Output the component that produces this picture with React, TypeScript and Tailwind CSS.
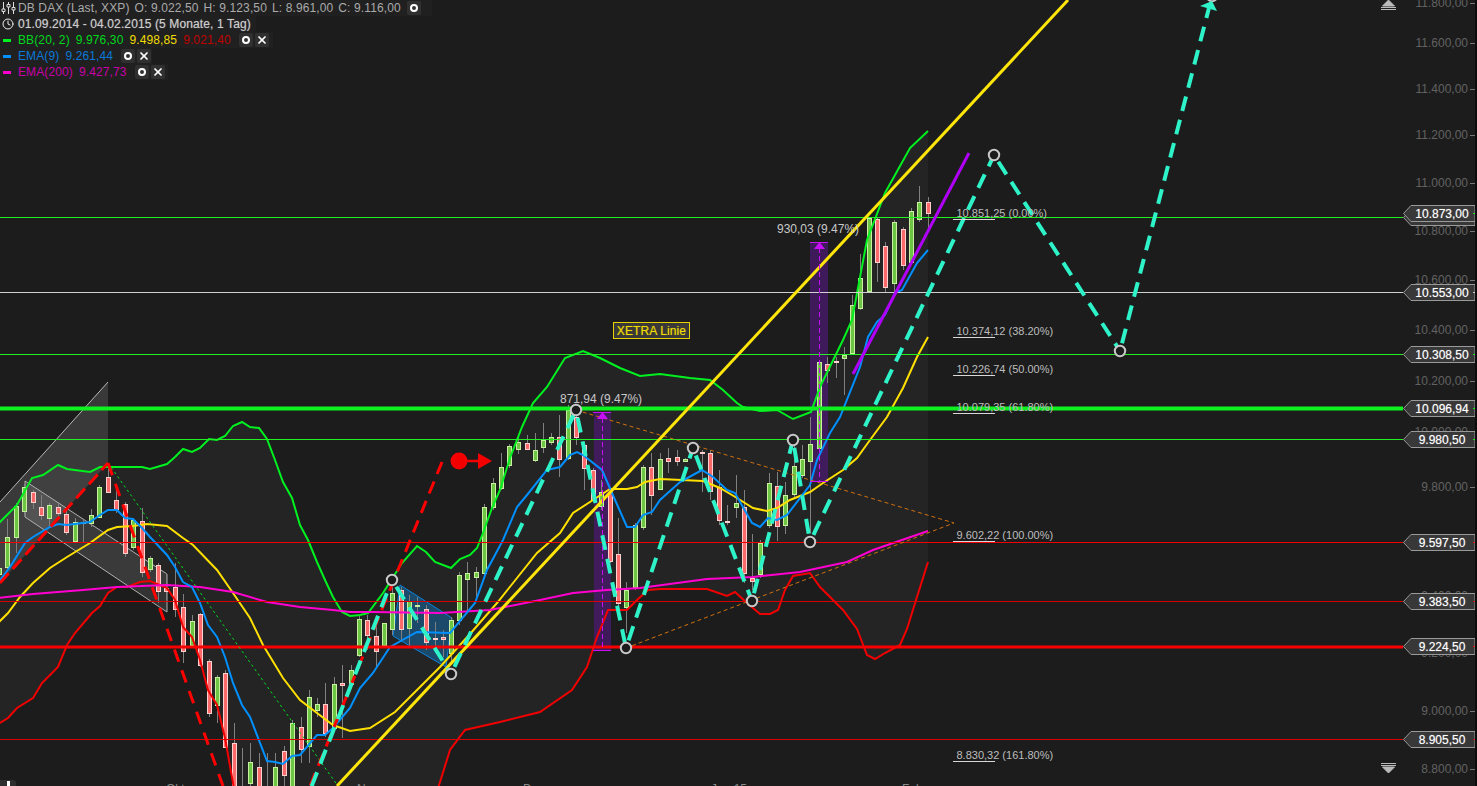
import React from 'react';
import { Clock, X } from 'lucide-react';

type Candle = [number, number, number, number, number, 'g' | 'r'];

// x, high, body top, body bottom, low, colour (all in chart pixels)
const CANDLES: Candle[] = [
  [-1, 565, 568, 574, 580, 'g'], [7, 519, 537, 567, 570, 'g'], [16, 503, 506, 537, 553, 'g'], [24, 484, 487, 511, 515, 'g'],
  [33, 490, 492, 502, 509, 'r'], [41, 495, 507, 515, 520, 'r'], [49, 503, 505, 518, 527, 'g'], [58, 502, 507, 513, 520, 'r'],
  [66, 510, 514, 532, 535, 'r'], [75, 518, 522, 541, 542, 'g'], [83, 520, 522, 523, 543, 'g'], [91, 509, 515, 523, 527, 'g'],
  [99, 485, 487, 517, 517, 'g'], [108, 468, 477, 492, 493, 'r'], [116, 490, 500, 509, 513, 'r'], [125, 502, 504, 553, 557, 'r'],
  [133, 518, 520, 547, 550, 'g'], [142, 508, 521, 572, 577, 'r'], [150, 556, 558, 569, 572, 'g'], [158, 563, 565, 591, 603, 'r'],
  [166, 573, 588, 591, 600, 'r'], [175, 563, 587, 609, 617, 'r'], [183, 594, 607, 651, 663, 'r'], [192, 615, 621, 645, 647, 'g'],
  [200, 613, 614, 665, 667, 'r'], [209, 659, 661, 713, 717, 'r'], [217, 675, 677, 705, 723, 'g'], [225, 670, 673, 747, 748, 'r'],
  [234, 723, 743, 800, 800, 'r'], [242, 748, 800, 810, 810, 'r'], [250, 743, 762, 783, 790, 'g'], [259, 753, 767, 800, 800, 'r'],
  [267, 753, 800, 810, 810, 'r'], [275, 753, 767, 800, 800, 'g'], [284, 746, 751, 775, 786, 'r'], [292, 720, 723, 800, 800, 'g'],
  [301, 717, 727, 749, 763, 'r'], [309, 690, 697, 746, 763, 'g'], [317, 698, 704, 710, 717, 'g'], [325, 683, 704, 733, 737, 'r'],
  [334, 677, 684, 728, 730, 'g'], [342, 665, 683, 685, 738, 'r'], [351, 665, 670, 684, 685, 'g'], [359, 615, 619, 655, 657, 'g'],
  [367, 615, 620, 635, 650, 'r'], [376, 623, 636, 651, 667, 'r'], [384, 623, 623, 645, 648, 'g'], [392, 587, 593, 629, 635, 'g'],
  [401, 587, 590, 629, 640, 'r'], [409, 595, 601, 628, 645, 'g'], [417, 597, 605, 606, 623, 'g'], [426, 605, 609, 642, 650, 'r'],
  [435, 622, 638, 639, 653, 'r'], [443, 630, 637, 639, 657, 'r'], [451, 617, 620, 653, 663, 'g'], [459, 572, 575, 620, 625, 'g'],
  [467, 562, 573, 579, 610, 'g'], [476, 567, 572, 577, 597, 'g'], [484, 504, 507, 573, 575, 'g'], [493, 478, 483, 507, 510, 'g'],
  [501, 453, 467, 488, 490, 'g'], [509, 444, 446, 465, 468, 'g'], [518, 437, 442, 449, 454, 'g'], [527, 435, 443, 449, 450, 'r'],
  [535, 433, 450, 460, 462, 'g'], [543, 423, 440, 447, 453, 'g'], [551, 433, 437, 442, 445, 'g'], [559, 415, 437, 459, 477, 'r'],
  [568, 405, 410, 458, 460, 'g'], [576, 413, 417, 437, 445, 'r'], [584, 443, 445, 468, 490, 'r'], [593, 468, 470, 500, 502, 'r'],
  [601, 480, 492, 506, 510, 'g'], [610, 490, 492, 561, 563, 'r'], [618, 518, 554, 603, 608, 'r'], [626, 582, 590, 607, 633, 'g'],
  [635, 523, 525, 587, 590, 'g'], [643, 465, 467, 527, 530, 'g'], [651, 453, 467, 495, 515, 'r'], [660, 453, 459, 489, 490, 'g'],
  [668, 448, 458, 461, 473, 'r'], [677, 450, 457, 461, 466, 'r'], [685, 458, 459, 461, 462, 'g'], [702, 450, 452, 453, 492, 'r'],
  [710, 450, 453, 491, 500, 'r'], [719, 470, 487, 520, 525, 'r'], [727, 505, 521, 522, 525, 'r'], [736, 475, 503, 507, 518, 'g'],
  [744, 490, 507, 573, 583, 'r'], [752, 534, 578, 581, 590, 'r'], [760, 540, 543, 574, 578, 'g'], [769, 473, 483, 525, 528, 'g'],
  [777, 472, 486, 526, 541, 'r'], [785, 482, 495, 525, 534, 'g'], [794, 443, 466, 494, 497, 'g'], [802, 445, 459, 475, 478, 'g'],
  [810, 417, 444, 461, 533, 'g'], [819, 360, 362, 448, 450, 'g'], [827, 357, 364, 370, 383, 'r'], [836, 357, 361, 362, 378, 'r'],
  [844, 347, 355, 358, 395, 'g'], [852, 295, 305, 353, 354, 'g'], [860, 254, 278, 308, 310, 'g'], [869, 217, 218, 291, 292, 'g'],
  [877, 218, 219, 262, 282, 'r'], [885, 242, 246, 287, 292, 'r'], [894, 220, 222, 283, 292, 'g'], [903, 227, 229, 265, 270, 'r'],
  [911, 208, 211, 262, 264, 'g'], [919, 186, 202, 219, 222, 'g'], [928, 197, 202, 213, 230, 'r'],
];

const BB_UPPER = [
  [-2, 524], [17, 505], [32, 478], [43, 475], [58, 465], [67, 469], [90, 472], [100, 467], [120, 467], [142, 467], [150, 469], [167, 464],
  [175, 457], [183, 449], [192, 452], [200, 448], [209, 439], [217, 440], [225, 436], [233, 426], [242, 422], [250, 427], [259, 428],
  [267, 439], [275, 460], [283, 482], [292, 498], [300, 525], [308, 540], [317, 562], [325, 580], [333, 597], [342, 612], [350, 616],
  [360, 615], [368, 613], [383, 593], [402, 563], [417, 546], [426, 552], [435, 562], [451, 568], [460, 559], [470, 555], [477, 548],
  [483, 533], [492, 508], [500, 490], [510, 458], [522, 427], [533, 403], [547, 387], [565, 358], [583, 351], [600, 358], [620, 368],
  [640, 376], [660, 374], [690, 378], [710, 380], [723, 390], [737, 403], [743, 407], [760, 411], [777, 410], [793, 419], [811, 412],
  [820, 387], [843, 340], [852, 320], [867, 240], [885, 193], [895, 175], [910, 148], [928, 131],
];

const BB_MID = [
  [-2, 623], [8, 613], [20, 597], [33, 583], [50, 568], [67, 557], [90, 543], [108, 530], [117, 527], [133, 526], [147, 524], [167, 526],
  [183, 538], [193, 545], [217, 570], [233, 593], [250, 618], [263, 645], [283, 678], [300, 700], [317, 713], [333, 725], [350, 731],
  [370, 728], [395, 712], [417, 690], [440, 667], [470, 634], [497, 603], [517, 578], [537, 553], [560, 533], [573, 513], [593, 500],
  [610, 489], [627, 489], [637, 487], [645, 482], [660, 479], [703, 481], [720, 488], [737, 498], [753, 508], [767, 511], [777, 508],
  [790, 500], [810, 492], [823, 483], [843, 470], [857, 458], [870, 440], [887, 417], [903, 388], [917, 357], [928, 337],
];

const BB_LOWER = [
  [-2, 724], [8, 718], [17, 708], [33, 698], [42, 683], [58, 667], [67, 645], [75, 633], [92, 613], [100, 606], [108, 593], [117, 587],
  [127, 587], [140, 582], [150, 581], [167, 588], [175, 600], [183, 627], [192, 637], [200, 660], [208, 690], [217, 705], [225, 738],
  [233, 783], [240, 830], [425, 830], [450, 750], [465, 730], [500, 722], [540, 712], [572, 690], [587, 667], [597, 637], [608, 610],
  [627, 610], [637, 600], [648, 590], [660, 589], [707, 589], [727, 596], [735, 592], [747, 603], [760, 614], [770, 614], [778, 610],
  [785, 590], [793, 576], [810, 573], [820, 587], [843, 610], [857, 629], [867, 655], [875, 659], [885, 653], [900, 645], [907, 629],
  [917, 597], [928, 562],
];

const EMA9 = [
  [-2, 583], [10, 567], [25, 543], [33, 537], [50, 527], [58, 524], [67, 525], [90, 522], [100, 515], [108, 510], [117, 510], [125, 518],
  [133, 519], [142, 528], [150, 537], [167, 555], [175, 567], [183, 582], [192, 587], [200, 603], [208, 625], [217, 637], [225, 657],
  [233, 683], [242, 705], [250, 717], [267, 761], [275, 762], [283, 764], [292, 756], [300, 755], [317, 735], [325, 735], [333, 728],
  [350, 708], [360, 688], [373, 673], [390, 647], [417, 632], [450, 633], [475, 603], [487, 570], [503, 540], [517, 507], [527, 495],
  [547, 470], [560, 467], [570, 455], [577, 452], [583, 455], [602, 470], [612, 493], [627, 527], [635, 527], [643, 515], [652, 512],
  [660, 500], [680, 482], [702, 470], [713, 477], [727, 490], [735, 493], [752, 523], [760, 527], [768, 518], [777, 520], [787, 515],
  [810, 485], [817, 460], [830, 433], [840, 417], [860, 367], [868, 337], [877, 322], [885, 315], [895, 293], [902, 290], [917, 263], [928, 250],
];

const EMA200 = [
  [-2, 598], [33, 594], [83, 590], [117, 587], [167, 585], [200, 587], [233, 592], [267, 602], [300, 607], [333, 610], [350, 612], [373, 612],
  [440, 613], [490, 610], [540, 600], [573, 593], [607, 590], [640, 588], [707, 579], [753, 577], [800, 572], [847, 562], [873, 550], [928, 531],
];

const TEAL_LEGS = [
  [[300, 816], [392, 580]], [[392, 580], [451, 674]], [[451, 674], [576, 410]], [[576, 410], [626, 648]], [[626, 648], [693, 448]],
  [[693, 448], [752, 601]], [[752, 601], [793, 440]], [[793, 440], [810, 542]], [[810, 542], [994, 155]], [[994, 155], [1120, 351]],
  [[1120, 351], [1210, 4]],
];

const PIVOTS = [[392, 580], [451, 674], [576, 410], [626, 648], [693, 448], [752, 601], [793, 440], [810, 542], [994, 155], [1120, 351], [1212, -4]];

const H_LINES: [number, string, number][] = [
  [217, '#22f022', 1], [292, '#d0d0d0', 1], [354, '#22f022', 1], [408, '#0ef31f', 4], [439, '#22f022', 1],
  [542, '#f00000', 1.2], [601, '#d80000', 1], [646.5, '#f80000', 3], [739, '#d80000', 1],
];

const FIBS: [string, number][] = [
  ['10.851,25 (0.00%)', 217], ['10.374,12 (38.20%)', 335], ['10.226,74 (50.00%)', 373], ['10.079,35 (61.80%)', 411],
  ['9.602,22 (100.00%)', 539], ['8.830,32 (161.80%)', 759],
];

const AXIS: [string, number][] = [
  ['11.800,00', 3], ['11.600,00', 43], ['11.400,00', 89], ['11.200,00', 135], ['11.000,00', 183], ['10.800,00', 231], ['10.600,00', 280],
  ['10.400,00', 330], ['10.200,00', 381], ['10.000,00', 432], ['9.800,00', 487], ['9.400,00', 596], ['9.200,00', 653], ['9.000,00', 711],
  ['8.800,00', 769],
];

const TAGS: [string, number, string][] = [
  ['', 217, '#22f022'], ['10.873,00', 213, '#22f022'], ['10.553,00', 292, '#d0d0d0'], ['10.308,50', 354, '#22f022'], ['10.096,94', 408, '#0ef31f'],
  ['9.980,50', 439, '#22f022'], ['9.597,50', 542, '#f00000'], ['9.383,50', 601, '#d80000'], ['9.224,50', 646, '#f80000'], ['8.905,50', 739, '#d80000'],
];

const MONTHS: [string, number][] = [['Okt', 166], ['Nov', 357], ['Dez', 523], ['Jan 15', 711], ['Feb', 902]];

const pts = (a: number[][]) => a.map((p) => p.join(',')).join(' ');

function EyeButton() {
  return (
    <span className="flex h-[14px] w-[14px] items-center justify-center rounded-[2px] bg-[#303030]">
      <span className="h-[8px] w-[8px] rounded-full border-2 border-white" />
    </span>
  );
}

function CloseButton() {
  return (
    <span className="flex h-[14px] w-[14px] items-center justify-center rounded-[2px] bg-[#303030]">
      <X size={12} strokeWidth={3.5} color="#fff" />
    </span>
  );
}

function Legend() {
  return (
    <div className="absolute left-0 top-0 flex flex-col items-start text-[12px] leading-[16px] tracking-[0.12px]">
      <div className="flex h-[16px] items-center bg-[#202020] pr-[11px]">
        <svg width="15" height="14" viewBox="0 0 15 14" className="ml-[1px] mr-[2px]" fill="none" stroke="#ddd">
          <path d="M2.5 1v12M7.5 1v12M12.5 1v12" strokeWidth="1" />
          <path d="M1 8h3v2.5H1zM6 3.5h3V6H6zM11 6.5h3V9h-3z" fill="#202020" strokeWidth="1" />
        </svg>
        <span className="text-[#aaaaaa]">DB DAX (Last, XXP)</span>
        <span className="ml-[5px] text-[#aaaaaa]">O: 9.022,50</span>
        <span className="ml-[5px] text-[#aaaaaa]">H: 9.123,50</span>
        <span className="ml-[5px] text-[#aaaaaa]">L: 8.961,00</span>
        <span className="ml-[5px] text-[#aaaaaa]">C: 9.116,00</span>
        <span className="ml-[6px]"><EyeButton /></span>
      </div>
      <div className="flex h-[16px] items-center bg-[#202020] pr-[5px]">
        <span className="ml-[2px] mr-[4px] flex w-[12px] justify-center"><Clock size={12} strokeWidth={2} color="#eee" /></span>
        <span className="text-[#cccccc] [text-shadow:0_0_1px_rgba(255,255,255,0.45)]">01.09.2014 - 04.02.2015 (5 Monate, 1 Tag)</span>
      </div>
      <div className="flex h-[16px] items-center bg-[#202020] pr-[4px]">
        <span className="ml-[3px] mr-[7px] h-[3px] w-[8px] bg-[#00f020]" />
        <span className="text-[#00d81c]">BB(20, 2)</span>
        <span className="ml-[6px] text-[#00d81c]">9.976,30</span>
        <span className="ml-[6px] text-[#f0dc00]">9.498,85</span>
        <span className="ml-[6px] text-[#c00000]">9.021,40</span>
        <span className="ml-[8px] flex gap-[2px]"><EyeButton /><CloseButton /></span>
      </div>
      <div className="flex h-[16px] items-center bg-[#202020] pr-[1px]">
        <span className="ml-[3px] mr-[7px] h-[3px] w-[8px] bg-[#0090ff]" />
        <span className="text-[#0a78d8]">EMA(9)</span>
        <span className="ml-[6px] text-[#0a78d8]">9.261,44</span>
        <span className="ml-[8px] flex gap-[2px]"><EyeButton /><CloseButton /></span>
      </div>
      <div className="flex h-[16px] items-center bg-[#202020] pr-[3px]">
        <span className="ml-[3px] mr-[7px] h-[3px] w-[8px] bg-[#ff00d0]" />
        <span className="text-[#c800a8]">EMA(200)</span>
        <span className="ml-[6px] text-[#c800a8]">9.427,73</span>
        <span className="ml-[8px] flex gap-[2px]"><EyeButton /><CloseButton /></span>
      </div>
    </div>
  );
}

function ChartDrawing() {
  return (
    <svg width="1403" height="786" className="absolute left-0 top-0 block" fill="none">
      {/* bollinger band fill */}
      <polygon points={pts([...BB_UPPER, ...[...BB_LOWER].reverse()])} fill="#242424" />

      {/* grey channels */}
      <polygon points="0,502 108,382 108,463 0,583" fill="#ffffff" fillOpacity="0.13" />
      <polyline points="0,502 108,382" stroke="#b8b8b8" />
      <polygon points="25,481 167,574 167,612 25,517" fill="#ffffff" fillOpacity="0.1" stroke="#b0b0b0" />

      {/* measure bars */}
      <rect x="594" y="412" width="17" height="238" fill="#4a1a70" fillOpacity="0.75" />
      <rect x="810" y="242" width="18" height="239" fill="#4a1a70" fillOpacity="0.75" />

      {/* blue box */}
      <polygon points="400,585 452,618 446,667 393,636" fill="#1b4a6b" stroke="#0a84e0" />

      {CANDLES.map(([x, hi, top, bot, lo, c]) => (
        <g key={x}>
          <line x1={x + 0.5} x2={x + 0.5} y1={hi} y2={lo} stroke="#808080" />
          <rect
            x={x - 1.5}
            y={top + 0.5}
            width={4}
            height={Math.max(bot - top, 1)}
            fill={c === 'g' ? '#6cc644' : '#fa6a6a'}
            stroke={c === 'g' ? '#c8f0a0' : '#ffd0d0'}
          />
        </g>
      ))}

      <polyline points={pts(BB_LOWER)} stroke="#f00000" strokeWidth="2" />
      <polyline points={pts(BB_UPPER)} stroke="#00f020" strokeWidth="2" />
      <polyline points={pts(BB_MID)} stroke="#ffe000" strokeWidth="2" />
      <polyline points={pts(EMA200)} stroke="#ff00d0" strokeWidth="2" />
      <polyline points={pts(EMA9)} stroke="#0090ff" strokeWidth="2" />

      {H_LINES.map(([y, c, w]) => (
        <line key={y} x1="0" x2="1403" y1={y + 0.5} y2={y + 0.5} stroke={c} strokeWidth={w} />
      ))}

      {/* triangle */}
      <polyline points="576,410 954,523 626,648" stroke="#d0700f" strokeDasharray="4 3" />

      {/* green dotted fall line */}
      <line x1="108" y1="463" x2="338" y2="786" stroke="#00e020" strokeDasharray="2.5 3" />

      {/* red dashed */}
      <line x1="0" y1="583" x2="108" y2="463" stroke="#ff0000" strokeWidth="3" strokeDasharray="13 6" />
      <line x1="108" y1="463" x2="223" y2="786" stroke="#ff0000" strokeWidth="3" strokeDasharray="13 9" />
      <line x1="442" y1="462" x2="310" y2="786" stroke="#ff0000" strokeWidth="3" strokeDasharray="13 8" />

      {/* trend lines */}
      <line x1="337" y1="786" x2="1068" y2="0" stroke="#ffe60a" strokeWidth="3" />
      <line x1="853" y1="374" x2="969" y2="153" stroke="#b000f8" strokeWidth="3" />

      {/* purple measure lines */}
      <line x1="602.5" x2="602.5" y1="418" y2="650" stroke="#c810f8" strokeDasharray="5 3" />
      <line x1="819.5" x2="819.5" y1="248" y2="481" stroke="#c810f8" strokeDasharray="5 3" />
      <path d="M593 412.5h18M593 650.5h18M810 242.5h18M810 481.5h18" stroke="#c810f8" />
      <polygon points="602.5,412 597,419 608,419" fill="#c810f8" />
      <polygon points="819.5,242 814,249 825,249" fill="#c810f8" />

      {/* red marker */}
      <circle cx="459" cy="461" r="8.5" fill="#f40000" />
      <line x1="467" y1="461" x2="480" y2="461" stroke="#f40000" strokeWidth="2.5" />
      <polygon points="478,453 492,461 478,469" fill="#f40000" />

      {TEAL_LEGS.map((l, i) => (
        <polyline key={i} points={pts(l)} stroke="#2ef2c8" strokeWidth="4" strokeDasharray="15 9" strokeDashoffset="-8" />
      ))}

      {PIVOTS.map(([x, y]) => (
        <circle key={x} cx={x} cy={y} r="5.2" stroke="#c8c8c8" strokeWidth="2" fill="#1c1c1c" />
      ))}
      <polygon points="1200,6 1212,1 1217,11" fill="#2ef2c8" />

      {/* fib labels */}
      {FIBS.map(([t, y]) => (
        <g key={t}>
          <text x="956.5" y={y} className="fill-[#bdbdbd] text-[11px]">{t}</text>
          <line x1="953" x2="995" y1={y + 2.5} y2={y + 2.5} stroke="#d8d8d8" />
        </g>
      ))}

      <text x="560" y="403" className="fill-[#c8c8c8] text-[12px]">871,94 (9.47%)</text>
      <text x="777" y="233" className="fill-[#c8c8c8] text-[12px]">930,03 (9.47%)</text>

      {/* scroll arrows */}
      <path d="M1388.5 0l6 6h-12zM1381 7.5h15M1381 9.5h15" fill="#bbbbbb" stroke="#bbbbbb" strokeWidth="1" />
      <path d="M1381 763.5h15M1381 765.5h15M1388.5 773l-6-6h12z" fill="#bbbbbb" stroke="#bbbbbb" strokeWidth="1" />
    </svg>
  );
}

export default function App() {
  return (
    <div className="flex h-[786px] w-[1477px] overflow-hidden bg-[#1c1c1c] font-['Liberation_Sans',Arial,sans-serif]">
      <main className="relative h-full w-[1403px] shrink-0 overflow-hidden">
        <ChartDrawing />
        <Legend />

        <div className="absolute left-[613px] top-[322px] flex h-[17px] w-[77px] items-center justify-center border border-[#e6d200] bg-[#383838] text-[12px] tracking-[0.12px] text-[#f0dc00] [text-shadow:0_0_1px_rgba(240,220,0,0.5)]">
          XETRA Linie
        </div>

        {MONTHS.map(([m, x]) => (
          <span key={m} className="absolute top-[782px] text-[12px] leading-[14px] text-[#8a8a8a]" style={{ left: x }}>
            {m}
          </span>
        ))}

        <div className="absolute bottom-0 left-0 flex h-[6px] w-[16px] justify-center rounded-tr-[3px] bg-[#2e2e2e]">
          <span className="mt-[1px] h-[5px] w-[3px] bg-white" />
        </div>
      </main>

      <aside className="relative h-full flex-1 overflow-hidden">
        {AXIS.map(([t, y]) => (
          <div key={t} className="absolute right-[9px] flex items-center text-[12px] leading-[14px] text-[#626262]" style={{ top: y - 7 }}>
            {t}
          </div>
        ))}
        {AXIS.map(([t, y]) => (
          <span key={t} className="absolute right-[2px] h-px w-[5px] bg-[#777777]" style={{ top: y }} />
        ))}
        {TAGS.map(([t, y, c]) => (
          <div key={y} className="absolute left-0 flex h-[17px] w-[72px] items-center justify-center pl-[6px] text-[12px] text-white [text-shadow:0_0_1px_rgba(255,255,255,0.5)]" style={{ top: y - 8 }}>
            <svg width="72" height="17" className="absolute left-0 top-0">
              <polygon points="0.5,8.5 8,0.5 72,0.5 72,16.5 8,16.5" fill="#383838" stroke="#9a9a9a" />
            </svg>
            <span className="relative">{t}</span>
            <span className="absolute right-0 top-[8px] h-px w-[2px]" style={{ backgroundColor: c }} />
          </div>
        ))}
        <div className="absolute right-0 top-0 h-full w-[2px] bg-[#0c0c0c]" />
      </aside>
    </div>
  );
}
